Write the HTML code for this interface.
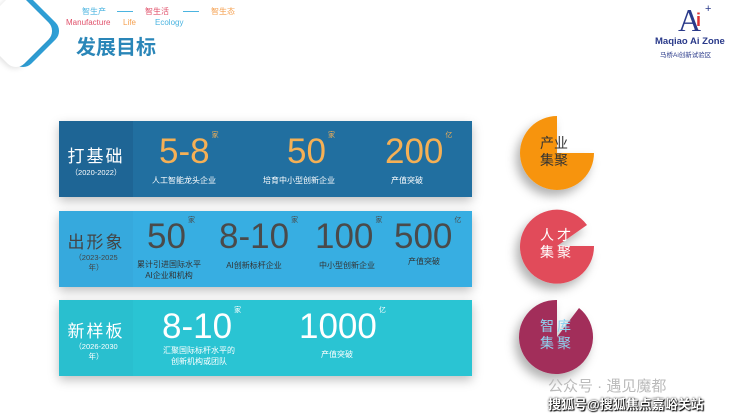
<!DOCTYPE html><html><head><meta charset="utf-8"><style>
body{margin:0;width:740px;height:419px;background:#fff;position:relative;overflow:hidden;font-family:"Liberation Sans","Noto Sans CJK SC",sans-serif}
.a{position:absolute;white-space:nowrap}
.row{position:absolute;left:59px;width:413px;height:76px;box-shadow:0 4px 10px rgba(0,0,0,.25)}
.lab{position:absolute;left:0;top:0;width:74px;height:100%;text-align:center;color:#fff}
.big{position:absolute;font-size:35px;line-height:1;text-align:center}
.u{font-size:7px;vertical-align:top;position:relative;top:-2px;margin-left:2px}
.sm{position:absolute;font-size:8px;text-align:center;line-height:11px}
</style></head><body>
<div class="a" style="left:-6px;top:2px;width:58px;height:58px;background:#2f9fd6;border-radius:12px;transform:rotate(45deg)"></div>
<div class="a" style="left:-13px;top:2px;width:58px;height:58px;background:#fff;border-radius:12px;transform:rotate(45deg);box-shadow:0 2px 6px rgba(0,0,0,.12)"></div>
<div class="a" style="left:82px;top:6px;font-size:8px;color:#4bb4e0">智生产</div>
<div class="a" style="left:117px;top:11px;width:16px;border-top:1px solid #4bb4e0"></div>
<div class="a" style="left:145px;top:6px;font-size:8px;color:#e0506a">智生活</div>
<div class="a" style="left:183px;top:11px;width:16px;border-top:1px solid #4bb4e0"></div>
<div class="a" style="left:211px;top:6px;font-size:8px;color:#f5a050">智生态</div>
<div class="a" style="left:66px;top:18px;font-size:8px;color:#e0506a">Manufacture</div>
<div class="a" style="left:123px;top:18px;font-size:8px;color:#f5a050">Life</div>
<div class="a" style="left:155px;top:18px;font-size:8px;color:#4bb4e0">Ecology</div>
<div class="a" style="left:76px;top:31px;font-size:20px;font-weight:bold;color:#2a86b8">发展目标</div>
<div class="a" style="left:678px;top:2px;font-size:32px;font-family:'Liberation Serif',serif;color:#2a3a8a">A</div>
<div class="a" style="left:696px;top:10px;font-size:18px;font-weight:bold;color:#d33">i</div>
<div class="a" style="left:705px;top:3px;font-size:11px;color:#2a3a8a">+</div>
<div class="a" style="left:655px;top:36px;font-size:9.5px;font-weight:bold;color:#2a3a8a">Maqiao Ai Zone</div>
<div class="a" style="left:660px;top:49px;font-size:6.5px;color:#2a3a8a">马桥Ai创新试验区</div>

<div class="row" style="top:121px;background:#216fa0">
<div class="lab" style="background:#1e6595"><div style="margin-top:21px;font-size:17px;letter-spacing:2px">打基础</div><div style="font-size:7.5px">（2020-2022）</div></div>
<div class="big" style="left:100px;top:13px;color:#f5b055">5-8<span class="u">家</span></div>
<div class="sm" style="left:85px;top:54px;width:80px;color:#fff">人工智能龙头企业</div>
<div class="big" style="left:228px;top:13px;color:#f5b055">50<span class="u">家</span></div>
<div class="sm" style="left:195px;top:54px;width:90px;color:#fff">培育中小型创新企业</div>
<div class="big" style="left:326px;top:13px;color:#f5b055">200<span class="u">亿</span></div>
<div class="sm" style="left:318px;top:54px;width:60px;color:#fff">产值突破</div></div>

<div class="row" style="top:211px;background:#37aee2">
<div class="lab" style="background:#36a9dd"><div style="margin-top:17px;font-size:17px;letter-spacing:2px;color:#444">出形象</div><div style="font-size:7.5px;color:#444;line-height:10px">（2023-2025<br>年）</div></div>
<div class="big" style="left:88px;top:8px;color:#4a4a4a">50<span class="u">家</span></div>
<div class="sm" style="left:65px;top:48px;width:90px;color:#333">累计引进国际水平<br>AI企业和机构</div>
<div class="big" style="left:160px;top:8px;color:#4a4a4a">8-10<span class="u">家</span></div>
<div class="sm" style="left:155px;top:49px;width:80px;color:#333">AI创新标杆企业</div>
<div class="big" style="left:256px;top:8px;color:#4a4a4a">100<span class="u">家</span></div>
<div class="sm" style="left:248px;top:49px;width:80px;color:#333">中小型创新企业</div>
<div class="big" style="left:335px;top:8px;color:#4a4a4a">500<span class="u">亿</span></div>
<div class="sm" style="left:335px;top:45px;width:60px;color:#333">产值突破</div></div>

<div class="row" style="top:300px;background:#2ac4d3">
<div class="lab" style="background:#29bfcf"><div style="margin-top:17px;font-size:17px;letter-spacing:2px">新样板</div><div style="font-size:7.5px;line-height:10px">（2026-2030<br>年）</div></div>
<div class="big" style="left:103px;top:9px;color:#fff">8-10<span class="u">家</span></div>
<div class="sm" style="left:95px;top:45px;width:90px;color:#fff">汇聚国际标杆水平的<br>创新机构或团队</div>
<div class="big" style="left:240px;top:9px;color:#fff">1000<span class="u">亿</span></div>
<div class="sm" style="left:248px;top:49px;width:60px;color:#fff">产值突破</div></div>

<svg class="a" style="left:0;top:0" width="740" height="419">
<defs><filter id="s" x="-50%" y="-50%" width="200%" height="200%"><feDropShadow dx="-4" dy="6" stdDeviation="5" flood-opacity=".3"/></filter></defs>
<path filter="url(#s)" d="M557 153 L557 116 A37 37 0 1 0 594 153 Z" fill="#f7940a"/>
<path filter="url(#s)" d="M557 246 L587 225 A37 37 0 1 0 594 246 Z" fill="#e14c5a"/>
<path filter="url(#s)" d="M557 337 L557 300 A37 37 0 1 0 579 308 Z" fill="#a22e5a"/>
</svg>
<div class="a" style="left:540px;top:135px;font-size:14px;line-height:17px;color:#333">产业<br>集聚</div>
<div class="a" style="left:540px;top:227px;font-size:14px;line-height:17px;color:#fff;letter-spacing:3px">人才<br>集聚</div>
<div class="a" style="left:540px;top:318px;font-size:14px;line-height:17px;color:#8fd3f0;letter-spacing:3px">智库<br>集聚</div>
<div class="a" style="left:548px;top:375px;font-size:15px;color:#bbb">公众号 · 遇见魔都</div>
<div class="a" style="left:548px;top:394px;font-size:13px;color:#fff;font-weight:bold;text-shadow:0 0 2px #000,1px 1px 1px #000">搜狐号@搜狐焦点嘉峪关站</div>
</body></html>
